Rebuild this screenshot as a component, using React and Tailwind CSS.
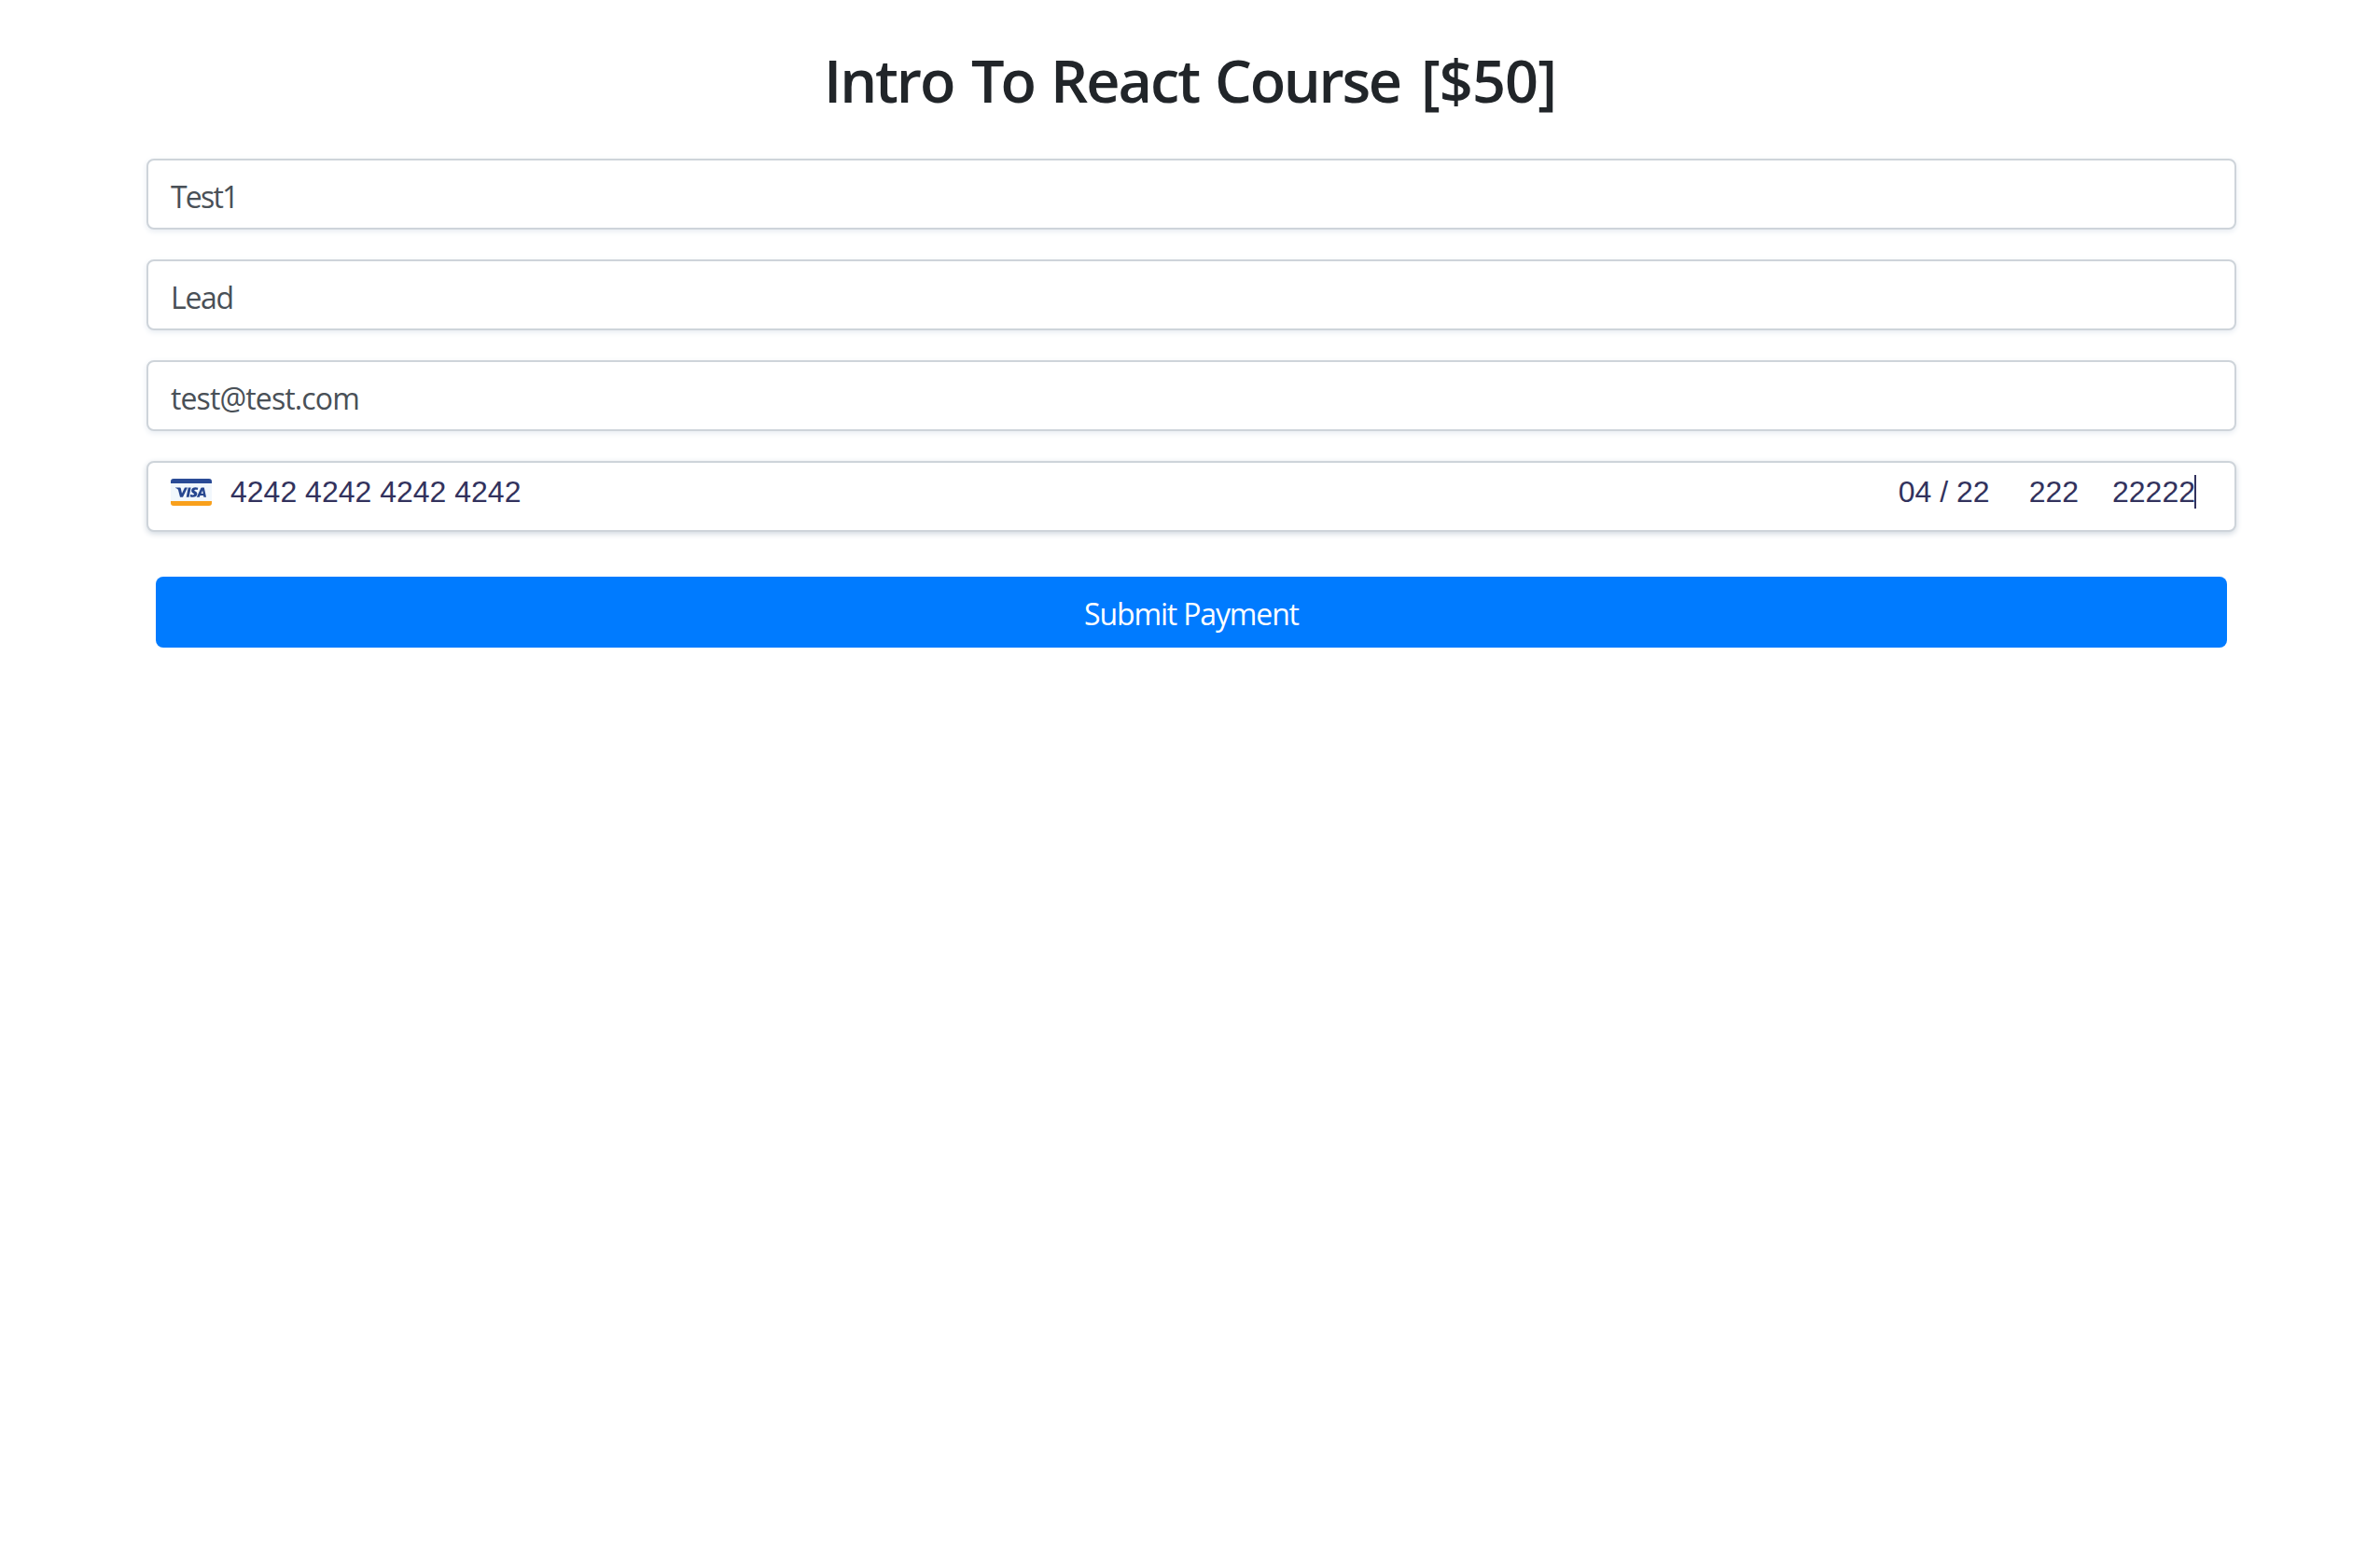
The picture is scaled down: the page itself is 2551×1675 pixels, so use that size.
const fields = [
  { value: "Test1", tracking: "tracking-[-1.8px]" },
  { value: "Lead", tracking: "tracking-[-1.3px]" },
  { value: "test@test.com", tracking: "tracking-[-0.88px]" },
];

function VisaIcon() {
  return (
    <svg viewBox="0 0 44 29" className="w-11 h-[29px] shrink-0" aria-label="Visa">
      <rect width="44" height="29" rx="3" fill="#f1f7fc" />
      <path d="M3 0h38a3 3 0 0 1 3 3v2H0V3a3 3 0 0 1 3-3z" fill="#2a4b96" />
      <path d="M0 24h44v2a3 3 0 0 1-3 3H3a3 3 0 0 1-3-3z" fill="#f9a01b" />
      <g fill="#26468f">
        <path d="M5 9.5h4.6c.8 0 1.1.4 1.3 1.2l1.1 5.1 3-6.3h3L13 19.7h-3L8 12c-.6-1.1-1.6-1.6-3-2z" />
        <path d="M18.7 9.5h2.9l-2 10.2h-2.9z" />
        <path d="M29.3 9.8l-.5 2.3c-1.8-.8-3.500-.5-3.500.3 0 1 3.200 1.200 3.100 3.900-.1 3.400-4.500 4.200-7.700 2.900l.5-2.400c1.800 1 4 .8 4-.2 0-1.100-3.100-1.200-3.100-3.900.1-3.200 4.100-4.100 7.200-2.900z" />
        <path fillRule="evenodd" d="M33.3 9.5h2.5l2.200 10.200h-2.600l-.4-1.600h-3.500l-.7 1.600h-3l4.300-9.200c.2-.6.6-1 1.200-1zm.8 3.100l-1.400 3.400h2z" />
      </g>
    </svg>
  );
}

export default function App() {
  return (
    <main className="min-h-screen bg-white font-['Open_Sans',sans-serif]">
      <div className="ml-[157px] w-[2240px] pt-[47px]">
        <h1 className="flex h-[77px] pl-[726px] whitespace-pre text-[63px] leading-[77px] font-semibold text-[#212529]">
          <span className="w-[158px] tracking-[-2.1px]">Intro </span>
          <span className="w-[85px] tracking-[-4px]">To </span>
          <span className="w-[176px] tracking-[-2px]">React </span>
          <span className="w-[221px] tracking-[-2.3px]">Course </span>
          <span className="tracking-[-0.9px]">[$50]</span>
        </h1>
        <form className="mt-[46px] flex flex-col gap-8">
          {fields.map((f) => (
            <div
              key={f.value}
              className={`h-[76px] rounded-lg border-2 border-[#ced4da] bg-white px-6 pt-[3px] text-[32px] leading-[72px] text-[#495057] shadow-[0_2px_6px_0_#e6ebf1] ${f.tracking}`}
            >
              {f.value}
            </div>
          ))}
          <div className="flex h-[76px] items-start rounded-lg border-2 border-[#ced4da] bg-white pt-3 pl-6 pr-[41px] font-['Liberation_Sans',sans-serif] text-[32px] leading-[38px] text-[#32325d] shadow-[0_2px_6px_0_#cfd7df]">
            <div className="mt-[5px]">
              <VisaIcon />
            </div>
            <span className="ml-5">4242 4242 4242 4242</span>
            <span className="ml-auto">04 / 22</span>
            <span className="ml-[42px]">222</span>
            <span className="ml-9">22222</span>
            <span className="mt-px -ml-px h-9 w-0.5 bg-[#32325d]" />
          </div>
          <button
            type="button"
            className="mx-2.5 mt-4 h-[76px] rounded-lg bg-[#007bff] pt-[3px] text-center text-[32px] leading-[73px] text-white tracking-[-1.15px]"
          >
            Submit Payment
          </button>
        </form>
      </div>
    </main>
  );
}
